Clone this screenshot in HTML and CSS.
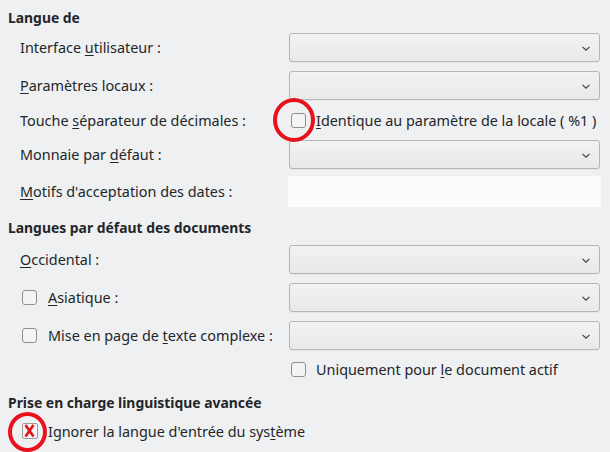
FILE: index.html
```html
<!DOCTYPE html>
<html lang="fr">
<head>
<meta charset="utf-8">
<link rel="stylesheet" href="styles.css">
</head>
<body>
<div class="page">
  <div class="title t1">Langue de</div>
  <div class="grid g1">
    <div class="label"><span>Interface <u>u</u>tilisateur :</span></div>
    <div class="combo"><svg class="chev" viewBox="0 0 8 5"><path d="M0.5 0.8 L4 4.2 L7.5 0.8"/></svg></div>
    <div class="label"><span><u>P</u>aramètres locaux :</span></div>
    <div class="combo"><svg class="chev" viewBox="0 0 8 5"><path d="M0.5 0.8 L4 4.2 L7.5 0.8"/></svg></div>
    <div class="label short"><span>Touche <u>s</u>éparateur de décimales :</span></div>
    <div class="check-row short"><span class="box"></span><span class="ctext"><u>I</u>dentique au paramètre de la locale ( %1 )</span></div>
    <div class="label"><span>Monnaie par <u>d</u>éfaut :</span></div>
    <div class="combo"><svg class="chev" viewBox="0 0 8 5"><path d="M0.5 0.8 L4 4.2 L7.5 0.8"/></svg></div>
    <div class="label tall"><span><u>M</u>otifs d'acceptation des dates :</span></div>
    <div class="edit"></div>
  </div>

  <div class="title t2">Langues par défaut des documents</div>
  <div class="grid g2">
    <div class="label"><span><u>O</u>ccidental :</span></div>
    <div class="combo"><svg class="chev" viewBox="0 0 8 5"><path d="M0.5 0.8 L4 4.2 L7.5 0.8"/></svg></div>
    <div class="check-row lab"><span class="box"></span><span class="ctext"><u>A</u>siatique :</span></div>
    <div class="combo"><svg class="chev" viewBox="0 0 8 5"><path d="M0.5 0.8 L4 4.2 L7.5 0.8"/></svg></div>
    <div class="check-row lab"><span class="box"></span><span class="ctext">Mise en page de <u>t</u>exte complexe :</span></div>
    <div class="combo"><svg class="chev" viewBox="0 0 8 5"><path d="M0.5 0.8 L4 4.2 L7.5 0.8"/></svg></div>
    <div class="spacer"></div>
    <div class="check-row small"><span class="box"></span><span class="ctext">Uniquement pour <u>l</u>e document actif</span></div>
  </div>

  <div class="title t3">Prise en charge linguistique avancée</div>
  <div class="check-row ignore"><span class="box xbox"><svg viewBox="0 0 16 16"><path d="M3.5 2 L11.5 13.5 M11.5 2 L3.5 13.5"/></svg></span><span class="ctext itext">Ignorer la langue d'entrée du sys<u>t</u>ème</span></div>

  <span class="ring ring1"></span>
  <span class="ring ring2"></span>
</div>
</body>
</html>
```

FILE: styles.css
```css
html, body {
  margin: 0;
  padding: 0;
  background: #eff0f1;
}
body {
  font-family: "Noto Sans", "DejaVu Sans", sans-serif;
  font-size: 14.4px;
  color: #232629;
}
.page {
  position: relative;
  width: 610px;
  height: 452px;
  padding: 8px 0 0 8px;
  box-sizing: border-box;
  overflow: hidden;
}
u {
  text-decoration: underline;
  text-underline-offset: 2px;
  text-decoration-thickness: 1px;
}
.title {
  font-weight: bold;
  font-size: 13.9px;
  height: 20px;
  line-height: 20px;
}
.t2 { margin-top: 11px; }
.t3 { margin-top: 13px; }
.grid {
  display: grid;
  grid-template-columns: 269px 311px;
  row-gap: 9px;
  padding-left: 12px;
}
.g1 { margin-top: 5px; }
.g2 { margin-top: 7px; }
.label {
  display: flex;
  align-items: center;
  height: 29px;
  white-space: nowrap;
}
.label.short { height: 22px; }
.label.tall { height: 31px; margin-top: -2px; }
.combo {
  position: relative;
  height: 29px;
  box-sizing: border-box;
  border: 1px solid #b4b5b6;
  border-radius: 3px;
  background: linear-gradient(#f1f2f2, #e8e9ea);
  box-shadow: 0 1px 0 rgba(0,0,0,0.04);
}
.chev {
  position: absolute;
  right: 9px;
  top: 12px;
  width: 8px;
  height: 5px;
  fill: none;
  stroke: #3b3f42;
  stroke-width: 1.1;
}
.edit {
  height: 31px;
  margin-top: -2px;
  margin-left: -1px;
  width: 313px;
  background: #fcfcfc;
}
.check-row {
  display: flex;
  align-items: center;
  height: 29px;
  white-space: nowrap;
}
.check-row.short { height: 22px; }
.check-row.small { height: 21px; }
.box {
  flex: none;
  width: 15px;
  height: 15px;
  box-sizing: border-box;
  border: 1px solid #8d8f91;
  border-radius: 3px;
  background: #f3f4f4;
  margin-left: 2px;
}
.ctext { margin-left: 10px; }
.check-row.lab .ctext { margin-left: 11px; }
.spacer { height: 21px; }
.ignore {
  margin-top: 8px;
  height: 20px;
  padding-left: 12px;
}
.xbox {
  width: 16px;
  height: 16px;
  position: relative;
  border-color: #9a9b9c;
  border-radius: 2px;
}
.xbox svg {
  position: absolute;
  left: -1px;
  top: -1px;
  width: 16px;
  height: 16px;
  fill: none;
  stroke: #e3121c;
  stroke-width: 2.6;
}
.itext { margin-left: 10px; }
.ring {
  position: absolute;
  border: 4.5px solid #e8121c;
  border-radius: 50%;
  box-sizing: border-box;
}
.ring1 {
  left: 273px;
  top: 98px;
  width: 42px;
  height: 44px;
}
.ring2 {
  left: 8px;
  top: 412px;
  width: 39px;
  height: 40px;
}
```
